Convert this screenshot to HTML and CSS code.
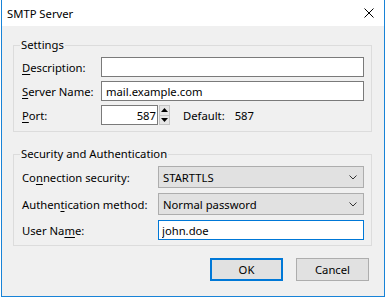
FILE: index.html
```html
<!DOCTYPE html>
<html lang="en">
<head>
  <meta charset="UTF-8" />
  <title>SMTP Server</title>
  <link rel="stylesheet" href="styles.css">
</head>
<body>

  <div class="window">
    <!-- Title bar -->
    <div class="titlebar">
      <span class="title">SMTP Server</span>
      <svg class="close" width="10" height="10" viewBox="0 0 10 10">
        <path d="M0.5 0.5L9.5 9.5M9.5 0.5L0.5 9.5" stroke="#000" stroke-width="1" fill="none"/>
      </svg>
    </div>

    <div class="content">
      <fieldset class="group">
        <legend>Settings</legend>
        <div class="grid settings-grid">
          <label><u>D</u>escription:</label>
          <input class="text-field" type="text" value="">

          <label><u>S</u>erver Name:</label>
          <input class="text-field" type="text" value="mail.example.com">

          <label><u>P</u>ort:</label>
          <div class="port-row">
            <input class="text-field port-field" type="text" value="587">
            <div class="spin">
              <div class="spin-btn">
                <svg width="7" height="4" viewBox="0 0 7 4"><path d="M3.5 0L7 4H0Z" fill="#000"/></svg>
              </div>
              <div class="spin-btn">
                <svg width="7" height="4" viewBox="0 0 7 4"><path d="M0 0H7L3.5 4Z" fill="#000"/></svg>
              </div>
            </div>
            <span class="default-label">Default:</span>
            <span class="default-value">587</span>
          </div>
        </div>
      </fieldset>

      <fieldset class="group security">
        <legend>Security and Authentication</legend>
        <div class="grid security-grid">
          <label>Co<u>n</u>nection security:</label>
          <div class="select">
            <span>STARTTLS</span>
            <svg width="8" height="5" viewBox="0 0 8 5"><path d="M0.5 0.5L4 4L7.5 0.5" stroke="#333" fill="none"/></svg>
          </div>

          <label>Authen<u>t</u>ication method:</label>
          <div class="select">
            <span>Normal password</span>
            <svg width="8" height="5" viewBox="0 0 8 5"><path d="M0.5 0.5L4 4L7.5 0.5" stroke="#333" fill="none"/></svg>
          </div>

          <label>User Na<u>m</u>e:</label>
          <input class="text-field focused" type="text" value="john.doe">
        </div>
      </fieldset>

      <div class="actions">
        <button class="btn btn-default">OK</button>
        <button class="btn">Cancel</button>
      </div>
    </div>
  </div>

</body>
</html>
```

FILE: styles.css
```css
* {
  margin: 0;
  padding: 0;
  box-sizing: border-box;
  font-family: "Noto Sans", sans-serif;
}
body {
  background: #fff;
  font-size: 11.25px;
  color: #000;
}
.window {
  margin-left: 1px;
  width: 384px;
  height: 297px;
  border: 1px solid #1883d7;
  border-top: none;
  background: #f0f0f0;
  display: flex;
  flex-direction: column;
}
/* Title bar */
.titlebar {
  height: 26px;
  background: #fff;
  display: flex;
  align-items: center;
  justify-content: space-between;
  padding: 0 10px 0 5px;
}
.content {
  flex: 1;
  padding: 0 12px 0 11px;
}
/* Group boxes */
.group {
  border: 1px solid #dcdcdc;
  margin-top: 11px;
  padding: 4px 7px 6px 8px;
}
.group legend {
  line-height: 16px;
  padding: 0 1px;
  margin-left: -2px;
}
.security {
  margin-top: 14px;
  padding-bottom: 5px;
}
.grid {
  display: grid;
  align-items: center;
}
.settings-grid {
  grid-template-columns: 79px 1fr;
  grid-template-rows: 20px 20px 20px;
  row-gap: 4px;
}
.security-grid {
  grid-template-columns: 136px 1fr;
  grid-template-rows: 22px 22px 20px;
  row-gap: 5px;
}
label u {
  text-decoration-thickness: 1px;
  text-underline-offset: 2px;
}
.text-field {
  height: 20px;
  width: 100%;
  border: 1px solid #7a7a7a;
  background: #fff;
  font-size: 11.25px;
  padding: 0 4px;
  outline: none;
}
.text-field.focused {
  border-color: #0078d7;
  padding-left: 3px;
}
/* Port row */
.port-row {
  display: flex;
  align-items: center;
  height: 20px;
}
.port-field {
  width: 57px;
  text-align: right;
  padding-right: 1px;
}
.spin {
  width: 11px;
  height: 20px;
  margin-left: 1px;
  display: flex;
  flex-direction: column;
}
.spin-btn {
  flex: 1;
  background: #e6e6e6;
  border: 1px solid #c4c4c4;
  display: flex;
  align-items: center;
  justify-content: center;
}
.spin-btn + .spin-btn {
  border-top: none;
}
.default-label {
  margin-left: 13px;
}
.default-value {
  margin-left: 10px;
}
/* Drop downs */
.select {
  height: 22px;
  border: 1px solid #adadad;
  background: #e1e1e1;
  display: flex;
  align-items: center;
  justify-content: space-between;
  padding: 0 6px 0 4px;
}
/* Buttons */
.actions {
  display: flex;
  justify-content: flex-end;
  gap: 13px;
  margin-top: 12px;
  padding-right: 3px;
}
.btn {
  width: 73px;
  height: 23px;
  background: #e1e1e1;
  border: 1px solid #adadad;
  font-size: 11.25px;
  color: #000;
}
.btn-default {
  border: 2px solid #0078d7;
}
```
